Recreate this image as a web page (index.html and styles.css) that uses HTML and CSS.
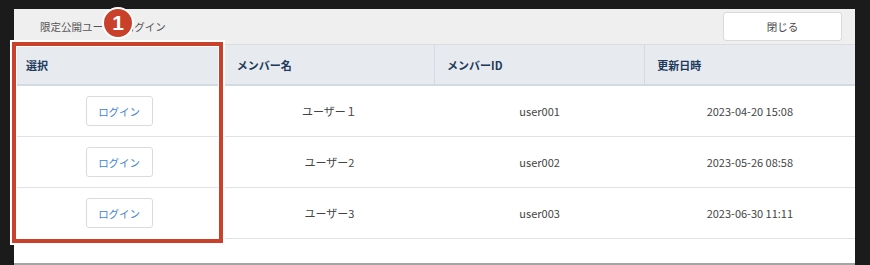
FILE: index.html
```html
<!DOCTYPE html>
<html lang="ja">
<head>
    <meta charset="UTF-8" />
    <meta name="viewport" content="width=device-width, initial-scale=1" />
    <title>限定公開ユーザーログイン</title>
    <link rel="stylesheet" href="styles.css">
</head>
<body>

    <!-- モーダル -->
    <div class="modal">
        <div class="modal-header">
            <span class="modal-title">限定公開ユーザーログイン</span>
            <button class="btn-close">閉じる</button>
        </div>

        <table class="member-table">
            <thead>
                <tr>
                    <th>選択</th>
                    <th>メンバー名</th>
                    <th>メンバーID</th>
                    <th>更新日時</th>
                </tr>
            </thead>
            <tbody>
                <tr>
                    <td><button class="btn-login">ログイン</button></td>
                    <td>ユーザー１</td>
                    <td>user001</td>
                    <td>2023-04-20 15:08</td>
                </tr>
                <tr>
                    <td><button class="btn-login">ログイン</button></td>
                    <td>ユーザー2</td>
                    <td>user002</td>
                    <td>2023-05-26 08:58</td>
                </tr>
                <tr>
                    <td><button class="btn-login">ログイン</button></td>
                    <td>ユーザー3</td>
                    <td>user003</td>
                    <td>2023-06-30 11:11</td>
                </tr>
            </tbody>
        </table>

        <!-- 注釈 -->
        <div class="highlight"></div>
        <div class="badge">1</div>
    </div>

</body>
</html>
```

FILE: styles.css
```css
html, body {
    overflow: hidden;
}

body {
    margin: 0;
    padding: 9px 15px 0 14px;
    height: 265px;
    box-sizing: border-box;
    background-color: #1b1b1b;
    font-family: "Noto Sans CJK JP", "Liberation Sans", sans-serif;
    color: #444;
}

/* モーダル本体 */
.modal {
    position: relative;
    height: 256px;
    box-sizing: border-box;
    background: #fff;
    border-bottom: 2px solid #a4a4a4;
}

.modal-header {
    height: 35px;
    display: flex;
    align-items: center;
    justify-content: space-between;
    padding: 0 13px 0 26px;
    background: #efefef;
    border-bottom: 1px solid #dcdcdc;
}

.modal-title {
    font-size: 10.5px;
    color: #555;
}

.btn-close {
    width: 119px;
    height: 29px;
    background: #fff;
    border: 1px solid #dadada;
    border-radius: 3px;
    font-family: inherit;
    font-size: 10.5px;
    color: #444;
    padding: 0;
}

/* テーブル */
.member-table {
    width: 100%;
    border-collapse: collapse;
    table-layout: fixed;
}

.member-table th {
    height: 39px;
    padding: 0 12px;
    text-align: left;
    font-size: 11px;
    font-weight: bold;
    color: #21395a;
    background: #e7ebf0;
    border-bottom: 2px solid #d3dae4;
    border-left: 1px solid #d3dae4;
}

.member-table th:first-child {
    border-left: none;
}

.member-table td {
    height: 50px;
    padding: 0;
    text-align: center;
    font-size: 11px;
    color: #444;
    border-bottom: 1px solid #dde3ea;
}

.btn-login {
    width: 67px;
    height: 30px;
    background: #fff;
    border: 1px solid #d9dcdf;
    border-radius: 3px;
    font-family: inherit;
    font-size: 10.5px;
    color: #3f84d6;
    padding: 0;
}

/* 赤枠の注釈 */
.highlight {
    position: absolute;
    left: -2px;
    top: 33px;
    width: 211px;
    height: 201px;
    box-sizing: border-box;
    border: 4px solid #c9402b;
    box-shadow: 0 0 0 2px #fff, inset 0 0 0 1px #fff;
}

.badge {
    position: absolute;
    left: 88px;
    top: -2px;
    width: 28px;
    height: 28px;
    border: 2px solid #fff;
    border-radius: 50%;
    background: #c9402b;
    color: #fff;
    font-family: "Liberation Sans", sans-serif;
    font-weight: bold;
    font-size: 21px;
    line-height: 28px;
    text-align: center;
}
```
